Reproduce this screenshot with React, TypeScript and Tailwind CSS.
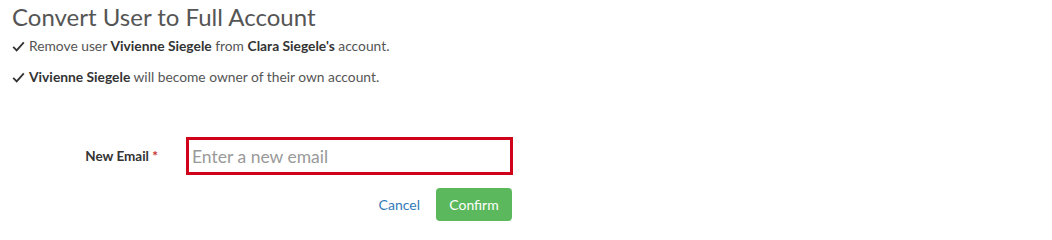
function Tick() {
	return (
		<svg viewBox="0 0 14 12" className="w-[13px] h-[11px] shrink-0 text-[#333]">
			<path
				d="M1.2 6.4 L5 10.2 L12.8 1.4"
				fill="none"
				stroke="currentColor"
				strokeWidth="2"
			/>
		</svg>
	);
}

export default function App() {
	return (
		<div className="w-[1052px] h-[233px] bg-white pl-3 font-['Lato',sans-serif] text-[#555]">
			<h1 className="text-[24px] leading-[34px] font-normal text-[#555]">
				Convert User to Full Account
			</h1>

			<div className="mt-[2px] space-y-[11px] text-[13.8px] leading-[20px]">
				<p className="flex items-center gap-[4px]">
					<Tick />
					<span>
						Remove user <b className="text-[#333]">Vivienne Siegele</b> from{" "}
						<b className="text-[#333]">Clara Siegele's</b> account.
					</span>
				</p>
				<p className="flex items-center gap-[4px]">
					<Tick />
					<span>
						<b className="text-[#333]">Vivienne Siegele</b> will become owner of
						their own account.
					</span>
				</p>
			</div>

			{/* Email field */}
			<div className="mt-[50px] flex items-start">
				<label className="w-[146px] pt-[9px] text-right text-[13.5px] font-bold text-[#333]">
					New Email <span className="text-[#c9302c]">*</span>
				</label>
				<input
					type="email"
					placeholder="Enter a new email"
					className="ml-[28px] w-[327px] h-[38px] border-[3px] border-[#d0021b] px-[3px] text-[17.5px] text-[#555] placeholder:text-[#999] outline-none"
				/>
			</div>

			{/* Actions */}
			<div className="mt-[13px] flex w-[500px] items-center justify-end gap-[16px]">
				<button className="text-[14px] text-[#337ab7]">Cancel</button>
				<button className="w-[76px] h-[33px] rounded-[4px] bg-[#5cb85c] text-[14px] text-white">
					Confirm
				</button>
			</div>
		</div>
	);
}
